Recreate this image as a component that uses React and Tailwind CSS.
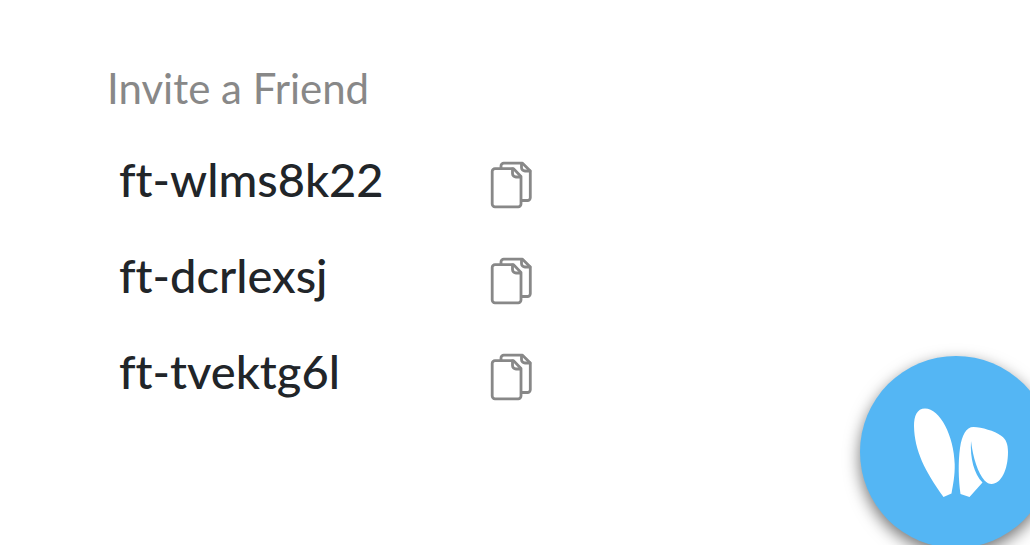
const codes = ["ft-wlms8k22", "ft-dcrlexsj", "ft-tvektg6l"];

function CopyIcon() {
  return (
    <svg
      viewBox="0 0 44 48"
      className="h-12 w-11"
      fill="none"
      stroke="currentColor"
      strokeWidth="2.8"
      strokeLinejoin="round"
      strokeLinecap="round"
      aria-hidden="true"
    >
      <path d="M6 7.600H24.500L32 15.500V43a2.800 2.800 0 0 1-2.800 2.800H6a2.800 2.800 0 0 1-2.800-2.800V10.400a2.800 2.800 0 0 1 2.800-2.800Z" />
      <path d="M23.500 8V12.500a3.500 3.500 0 0 0 3.500 3.500H31.500" />
      <path d="M12 7V5a2.800 2.800 0 0 1 2.800-2.800H33.500L41.300 10V36.700a2.800 2.800 0 0 1-2.800 2.800H33" />
      <path d="M32.500 2.500V6.500a3.500 3.500 0 0 0 3.500 3.500H41" />
    </svg>
  );
}

function EarsLogo() {
  return (
    <svg viewBox="0 0 120 110" className="h-[110px] w-[120px]" fill="#fff" aria-hidden="true">
      <path d="M25 12.5C17 12.5 14 20 14 30C14.500 55 25 75 43.500 101L51.500 97.500C53 89 55 80 54.700 68C54 40 40 12.500 25 12.500Z" />
      <path d="M60.500 98L69.500 101L82.500 86.500C74 78 70 62 71 45C73 62 78 77 84.500 84.500C87 87 89 88 91.500 88C101 88 108 74 108 56C108 48 106 43 101.500 40C94 34.500 82 31.500 73.500 31C66 31 62 39 60 52C58 66 58.500 84 60.500 98Z" />
    </svg>
  );
}

export default function App() {
  return (
    <main className="min-h-screen bg-white pt-[58px] pl-[107px] font-['Lato','Liberation_Sans',sans-serif]">
      <h1 className="text-[42px] leading-[60px] font-normal text-[#888888]">Invite a Friend</h1>
      <ul className="mt-4 max-w-[426px]">
        {codes.map((code) => (
          <li key={code} className="flex h-24 items-start justify-between pl-3">
            <span className="text-[47px] leading-[90px] font-medium text-[#212529] [font-variant-ligatures:none]">
              {code}
            </span>
            <button type="button" aria-label={`Copy ${code}`} className="mt-[27px] text-[#888888]">
              <CopyIcon />
            </button>
          </li>
        ))}
      </ul>
      <button
        type="button"
        aria-label="Open chat"
        className="fixed -right-[22px] -bottom-[3px] flex size-48 items-center justify-center rounded-full bg-[#54b6f4] pb-[3px] pl-2 shadow-[0_6px_16px_rgba(0,0,0,0.55)]"
      >
        <EarsLogo />
      </button>
    </main>
  );
}
